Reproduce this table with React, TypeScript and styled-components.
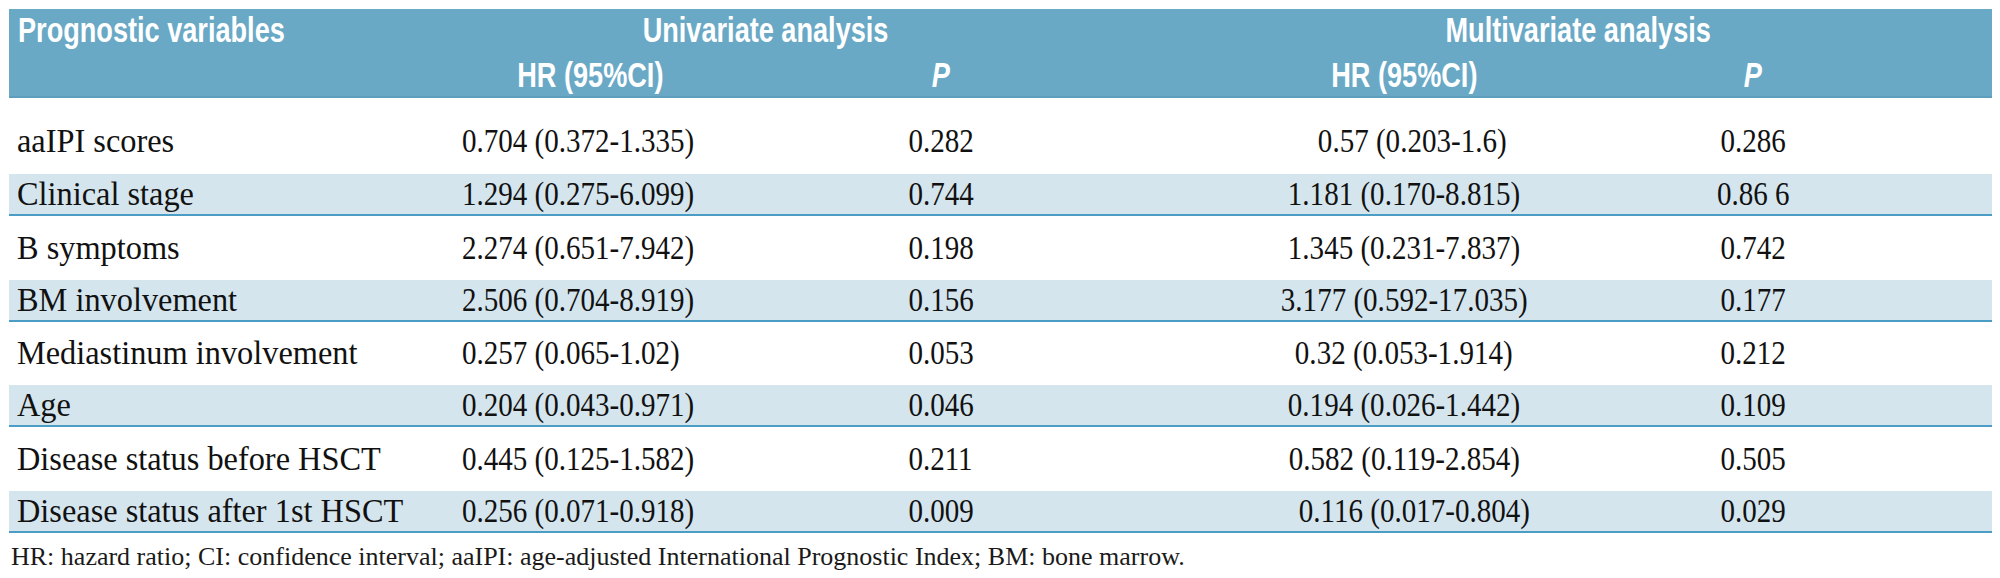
import React from 'react';
import styled, { createGlobalStyle } from 'styled-components';

const Global = createGlobalStyle`
  html, body { margin: 0; padding: 0; background: #ffffff; }
  body { width: 2000px; }
`;

const COLS = '405.5px 351px 351px 113px 349px 349px 64.5px';

const Page = styled.div`
  box-sizing: border-box;
  width: 2000px;
  padding: 9px 8px 0 9px;
`;

const Table = styled.div`
  width: 1983px;
`;

const Header = styled.div`
  display: grid;
  grid-template-columns: ${COLS};
  grid-template-rows: 40px 40px;
  row-gap: 5px;
  padding: 1px 0;
  background: #69a9c6;
  border-bottom: 2px solid #5d9ebd;
  color: #ffffff;
  font-family: "Liberation Sans", Arial, sans-serif;
  font-weight: 700;
  font-size: 35px;
  line-height: 40px;
  white-space: nowrap;
`;

const HeadCell = styled.div<{ $col: string; $row: number; $align?: 'left' | 'center'; $italic?: boolean }>`
  grid-column: ${(p) => p.$col};
  grid-row: ${(p) => p.$row};
  text-align: ${(p) => p.$align ?? 'center'};
  font-style: ${(p) => (p.$italic ? 'italic' : 'normal')};
  padding-left: ${(p) => (p.$align === 'left' ? '9px' : '0')};
`;

/* condensed face: the source uses a narrow type, approximated by horizontal scaling */
const Narrow = styled.span<{ $k: number; $origin?: 'left' | 'center' }>`
  display: inline-block;
  transform: scaleX(${(p) => p.$k});
  transform-origin: ${(p) => p.$origin ?? 'center'} center;
`;

const Row = styled.div<{ $tint: boolean; $first: boolean }>`
  display: grid;
  grid-template-columns: ${COLS};
  align-items: center;
  box-sizing: border-box;
  height: ${(p) => (p.$first ? '76px' : p.$tint ? '42px' : '63.67px')};
  padding-top: ${(p) => (p.$first ? '10px' : '0')};
  background: ${(p) => (p.$tint ? '#d4e5ee' : '#ffffff')};
  border-bottom: ${(p) => (p.$tint ? '2px solid #4c9dc5' : 'none')};
  font-family: "Liberation Serif", "Times New Roman", serif;
  font-size: 33px;
  line-height: 40px;
  color: #111111;
  white-space: nowrap;
`;

const Label = styled.div`
  grid-column: 1;
  padding-left: 8px;
`;

const UniHR = styled.div`
  grid-column: 2;
  padding-left: 47.5px;
`;

const Value = styled.div<{ $col: number; $shift?: number }>`
  grid-column: ${(p) => p.$col};
  text-align: center;
  padding-left: ${(p) => (p.$shift ? `${p.$shift}px` : '0')};
`;

const Footnote = styled.div`
  margin: 8px 0 0 2px;
  font-family: "Liberation Serif", "Times New Roman", serif;
  font-size: 26px;
  line-height: 32px;
  color: #1a1a1a;
  white-space: nowrap;
`;

type Item = { label: string; uhr: string; up: string; mhr: string; mp: string; shift?: number };

const rows: Item[] = [
  { label: 'aaIPI scores', uhr: '0.704 (0.372-1.335)', up: '0.282', mhr: '0.57 (0.203-1.6)', mp: '0.286', shift: 16 },
  { label: 'Clinical stage', uhr: '1.294 (0.275-6.099)', up: '0.744', mhr: '1.181 (0.170-8.815)', mp: '0.86 6' },
  { label: 'B symptoms', uhr: '2.274 (0.651-7.942)', up: '0.198', mhr: '1.345 (0.231-7.837)', mp: '0.742' },
  { label: 'BM involvement', uhr: '2.506 (0.704-8.919)', up: '0.156', mhr: '3.177 (0.592-17.035)', mp: '0.177' },
  { label: 'Mediastinum involvement', uhr: '0.257 (0.065-1.02)', up: '0.053', mhr: '0.32 (0.053-1.914)', mp: '0.212' },
  { label: 'Age', uhr: '0.204 (0.043-0.971)', up: '0.046', mhr: '0.194 (0.026-1.442)', mp: '0.109' },
  { label: 'Disease status before HSCT', uhr: '0.445 (0.125-1.582)', up: '0.211', mhr: '0.582 (0.119-2.854)', mp: '0.505' },
  { label: 'Disease status after 1st HSCT', uhr: '0.256 (0.071-0.918)', up: '0.009', mhr: '0.116 (0.017-0.804)', mp: '0.029', shift: 20 },
];

const HK = 0.775;
const NK = 0.88;
const LK = 0.98;

export default function App() {
  return (
    <Page>
      <Global />
      <Table>
        <Header>
          <HeadCell $col="1" $row={1} $align="left"><Narrow $k={HK} $origin="left">Prognostic variables</Narrow></HeadCell>
          <HeadCell $col="2 / 4" $row={1}><Narrow $k={HK}>Univariate analysis</Narrow></HeadCell>
          <HeadCell $col="5 / 7" $row={1}><Narrow $k={HK}>Multivariate analysis</Narrow></HeadCell>
          <HeadCell $col="2" $row={2}><Narrow $k={HK}>HR (95%CI)</Narrow></HeadCell>
          <HeadCell $col="3" $row={2} $italic><Narrow $k={HK}>P</Narrow></HeadCell>
          <HeadCell $col="5" $row={2}><Narrow $k={HK}>HR (95%CI)</Narrow></HeadCell>
          <HeadCell $col="6" $row={2} $italic><Narrow $k={HK}>P</Narrow></HeadCell>
        </Header>
        {rows.map((r, i) => (
          <Row key={r.label} $tint={i % 2 === 1} $first={i === 0}>
            <Label><Narrow $k={LK} $origin="left">{r.label}</Narrow></Label>
            <UniHR><Narrow $k={NK} $origin="left">{r.uhr}</Narrow></UniHR>
            <Value $col={3}><Narrow $k={NK}>{r.up}</Narrow></Value>
            <Value $col={5} $shift={r.shift}><Narrow $k={NK}>{r.mhr}</Narrow></Value>
            <Value $col={6}><Narrow $k={NK}>{r.mp}</Narrow></Value>
          </Row>
        ))}
      </Table>
      <Footnote>
        HR: hazard ratio; CI: confidence interval; aaIPI: age-adjusted International Prognostic Index; BM: bone marrow.
      </Footnote>
    </Page>
  );
}
